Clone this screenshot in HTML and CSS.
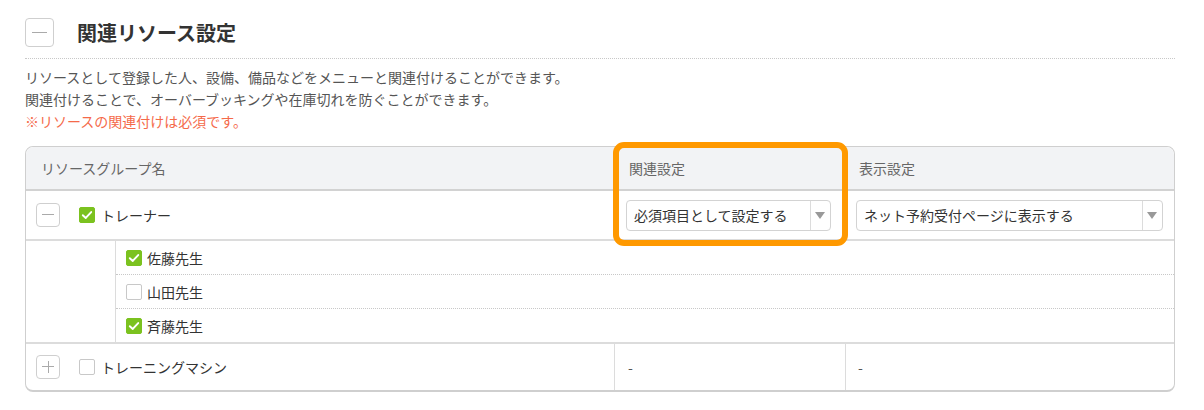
FILE: index.html
```html
<!DOCTYPE html>
<html lang="ja">
<head>
<meta charset="UTF-8">
<meta name="viewport" content="width=device-width, initial-scale=1.0">
<title>関連リソース設定</title>
<link rel="stylesheet" href="styles.css">
</head>
<body>
<div class="section">
    <div class="section-title">
        <span class="toggle toggle-large"><span class="bar"></span></span>
        <h2>関連リソース設定</h2>
    </div>
    <p class="desc">リソースとして登録した人、設備、備品などをメニューと関連付けることができます。<br>関連付けることで、オーバーブッキングや在庫切れを防ぐことができます。<br><span class="required">※リソースの関連付けは必須です。</span></p>

    <div class="resource-table">
        <div class="row head">
            <div class="cell">リソースグループ名</div>
            <div class="cell">関連設定</div>
            <div class="cell">表示設定</div>
        </div>

        <div class="row group">
            <div class="cell name-cell">
                <span class="toggle"><span class="bar"></span></span>
                <span class="check on"><svg viewBox="0 0 16 16"><polyline points="3.2,8.2 6.6,11.4 12.8,4.6"/></svg></span>
                <span class="label">トレーナー</span>
            </div>
            <div class="cell select-cell first">
                <div class="select"><span class="value">必須項目として設定する</span><span class="arrow"></span></div>
            </div>
            <div class="cell select-cell second">
                <div class="select"><span class="value">ネット予約受付ページに表示する</span><span class="arrow"></span></div>
            </div>
        </div>

        <div class="members">
            <div class="indent"></div>
            <div class="member-list">
                <div class="member">
                    <span class="check on"><svg viewBox="0 0 16 16"><polyline points="3.2,8.2 6.6,11.4 12.8,4.6"/></svg></span>
                    <span class="label">佐藤先生</span>
                </div>
                <div class="member">
                    <span class="check"></span>
                    <span class="label">山田先生</span>
                </div>
                <div class="member">
                    <span class="check on"><svg viewBox="0 0 16 16"><polyline points="3.2,8.2 6.6,11.4 12.8,4.6"/></svg></span>
                    <span class="label">斉藤先生</span>
                </div>
            </div>
        </div>

        <div class="row group last">
            <div class="cell name-cell">
                <span class="toggle"><span class="bar"></span><span class="bar vertical"></span></span>
                <span class="check"></span>
                <span class="label">トレーニングマシン</span>
            </div>
            <div class="cell dash">-</div>
            <div class="cell dash">-</div>
        </div>

        <div class="highlight"></div>
    </div>
</div>
</body>
</html>
```

FILE: styles.css
```css
body {
    margin: 0;
    padding: 0;
    font-family: "Noto Sans CJK JP", "Noto Sans", sans-serif;
    color: #333;
    background: #fff;
}
.section {
    width: 1150px;
    margin-left: 25px;
    padding-top: 18px;
}
.section-title {
    display: flex;
    align-items: center;
    gap: 23px;
    padding-bottom: 11px;
    border-bottom: 1px dotted #c8c8c8;
}
.section-title h2 {
    margin: 0;
    font-size: 20px;
    line-height: 29px;
    font-weight: bold;
    color: #333;
}
.toggle {
    position: relative;
    display: inline-block;
    box-sizing: border-box;
    width: 24px;
    height: 24px;
    border: 1px solid #cfcfcf;
    border-radius: 4px;
    background: #fff;
    flex: none;
}
.toggle-large {
    width: 29px;
    height: 29px;
}
.toggle .bar {
    position: absolute;
    left: 50%;
    top: 50%;
    width: 12px;
    height: 1px;
    margin-left: -6px;
    margin-top: -1px;
    background: #aaa;
}
.toggle-large .bar {
    width: 15px;
    margin-left: -7.5px;
}
.toggle .bar.vertical {
    width: 1px;
    height: 12px;
    margin-left: 0;
    margin-top: -6px;
}
.desc {
    margin: 7px 0 0;
    font-size: 14px;
    line-height: 22px;
    color: #555;
}
.required {
    color: #f56a4a;
}
.resource-table {
    position: relative;
    margin-top: 14px;
    border: 1px solid #cfcfcf;
    border-bottom-width: 2px;
    border-radius: 8px;
}
.row {
    display: grid;
    grid-template-columns: 588px 231px 1fr;
}
.cell {
    display: flex;
    align-items: center;
    font-size: 14px;
}
.head {
    height: 42px;
    background: #f2f3f5;
    border-bottom: 2px solid #d2d2d2;
    border-radius: 8px 8px 0 0;
}
.head .cell {
    padding-left: 15px;
    color: #666;
}
.head .cell:last-child {
    padding-left: 14px;
}
.group {
    height: 48px;
    border-bottom: 2px solid #dcdcdc;
}
.group.last {
    height: 46px;
    border-bottom: none;
}
.name-cell {
    padding-left: 10px;
}
.name-cell .check {
    margin-left: 19px;
}
.label {
    margin-left: 6px;
    color: #333;
}
.check {
    display: inline-block;
    box-sizing: border-box;
    width: 16px;
    height: 16px;
    border: 1px solid #c8c8c8;
    border-radius: 2px;
    background: #fff;
    flex: none;
}
.check.on {
    border-color: #7bc21f;
    background: #7bc21f;
}
.check svg {
    display: block;
    width: 14px;
    height: 14px;
}
.check polyline {
    fill: none;
    stroke: #fff;
    stroke-width: 2.2;
    stroke-linecap: round;
    stroke-linejoin: round;
}
.select-cell.first {
    padding: 0 14px 0 12px;
}
.select-cell.second {
    padding: 0 11px 0 11px;
}
.select {
    flex: 1;
    display: flex;
    align-items: stretch;
    box-sizing: border-box;
    height: 31px;
    border: 1px solid #d3d3d3;
    border-radius: 4px;
    background: #fff;
}
.select .value {
    flex: 1;
    display: flex;
    align-items: center;
    padding-left: 7px;
    color: #333;
}
.select .arrow {
    position: relative;
    width: 19px;
    border-left: 1px solid #dcdcdc;
}
.select .arrow::after {
    content: "";
    position: absolute;
    left: 4px;
    top: 11px;
    border-left: 5.5px solid transparent;
    border-right: 5.5px solid transparent;
    border-top: 7px solid #999;
}
.members {
    display: grid;
    grid-template-columns: 90px 1fr;
    border-bottom: 2px solid #dcdcdc;
}
.indent {
    border-right: 1px solid #dcdcdc;
}
.member {
    display: flex;
    align-items: center;
    height: 33px;
    padding-left: 10px;
    font-size: 14px;
    border-bottom: 1px dotted #c8c8c8;
}
.member:last-child {
    border-bottom: none;
}
.member .label {
    margin-left: 5px;
}
.dash {
    padding-left: 13px;
    border-left: 1px solid #dcdcdc;
    color: #555;
}
.dash:last-child {
    padding-left: 12px;
}
.highlight {
    position: absolute;
    left: 587px;
    top: -5px;
    width: 235px;
    height: 104px;
    box-sizing: border-box;
    border: 6px solid #ff9900;
    border-radius: 11px;
    pointer-events: none;
}
```
